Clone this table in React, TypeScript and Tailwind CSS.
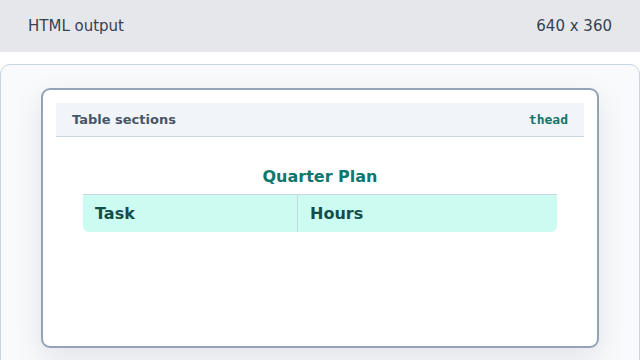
export default function App() {
  return (
    <div className="w-[640px] h-[360px] overflow-hidden bg-white font-['DejaVu_Sans',sans-serif]">
      <div className="h-[52px] bg-[#e5e7eb] flex items-center justify-between px-7 text-[15px] text-[#374151]">
        <span>HTML output</span>
        <span>640 x 360</span>
      </div>
      <div className="mt-3 h-[320px] rounded-[10px] border border-[#cbd5e1] bg-[#f8fafc] px-10 pt-[23px]">
        <div className="h-[260px] rounded-[9px] border-2 border-[#94a3b8] bg-white p-[13px] shadow-[0_10px_30px_rgba(15,23,42,0.10)]">
          <div className="h-[34px] flex items-center justify-between px-4 bg-[#f1f5f9] border-b border-[#cbd5e1]">
            <span className="text-[13px] font-bold text-[#475569]">Table sections</span>
            <span className="text-[13px] font-bold text-[#0f766e] font-['DejaVu_Sans_Mono',monospace]">thead</span>
          </div>
          <div className="pt-[30px]">
            <div className="w-[474px] mx-auto">
              <div className="text-center text-[16px] font-bold text-[#0f766e] leading-[19px] pb-[8px]">Quarter Plan</div>
              <div className="grid grid-cols-[214px_1fr] bg-[#ccfbf1] border-t border-[#cbd5e1] rounded-b-[6px] text-[16px] font-bold text-[#134e4a] leading-[19px]">
                <div className="px-3 py-[9px]">Task</div>
                <div className="px-3 py-[9px] border-l border-[#cbd5e1]">Hours</div>
              </div>
            </div>
          </div>
        </div>
      </div>
    </div>
  );
}
